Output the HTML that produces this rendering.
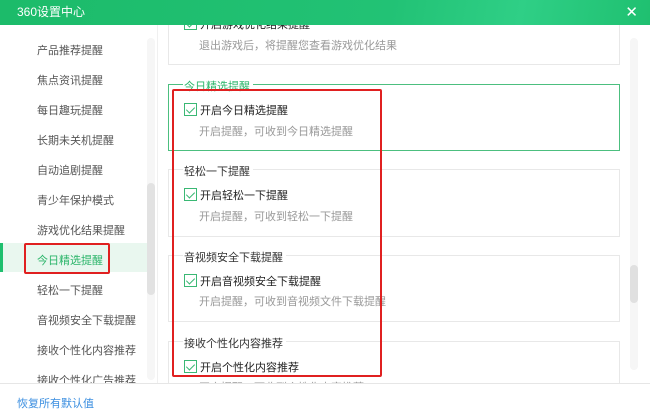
<!DOCTYPE html>
<html><head><meta charset="utf-8"><style>
*{margin:0;padding:0;box-sizing:border-box}
body{width:650px;height:416px;overflow:hidden;background:#fff;font-family:"Liberation Sans","Noto Sans CJK SC",sans-serif;font-size:11px;position:relative;color:#333}
.abs{position:absolute}
.title{left:0;top:0;width:650px;height:25px;background:linear-gradient(100deg,#1cbb6a,#22c275 60%,#2fcf86 80%,#1fc070);color:#fff;font-size:12px;line-height:25px;padding-left:17px;z-index:5}
.side{left:0;top:25px;width:157px;height:358px;background:#fff}
.item{position:absolute;left:37px;color:#555}
.sel{left:0;top:243px;width:148px;height:29px;background:#e9f7ef}
.bar{left:0;top:243px;width:3px;height:29px;background:#1fbf6e}
.box{position:absolute;left:168px;width:452px;border:1px solid #e8e8e8}
.legend{position:absolute;left:183px;background:#fff;padding:0 3px 0 1px;color:#333;font-size:11px}
.cb{position:absolute;left:184px;width:13px;height:13px;border:1px solid #3ab874;background:#fff}
.cb:after{content:"";position:absolute;left:3px;top:1px;width:4px;height:7px;border:solid #3ab874;border-width:0 1.5px 1.5px 0;transform:rotate(45deg)}
.lab{position:absolute;left:200px;color:#222}
.desc{position:absolute;left:199px;color:#999}
</style></head><body>
<div class="abs title">360设置中心<span style="position:absolute;right:12px;top:0;font-size:15px">✕</span></div>
<div class="abs side"></div>
<div class="abs" style="left:157px;top:25px;width:1px;height:358px;background:#f0f0f0"></div>
<div class="abs sel"></div><div class="abs bar"></div>
<div class="abs" style="left:147px;top:38px;width:8px;height:342px;background:#f6f6f6;border-radius:4px"></div>
<div class="abs" style="left:147px;top:183px;width:8px;height:112px;background:#e2e2e2;border-radius:4px"></div>
<div class="item" style="top:42px">产品推荐提醒</div>
<div class="item" style="top:72px">焦点资讯提醒</div>
<div class="item" style="top:102px">每日趣玩提醒</div>
<div class="item" style="top:132px">长期未关机提醒</div>
<div class="item" style="top:162px">自动追剧提醒</div>
<div class="item" style="top:192px">青少年保护模式</div>
<div class="item" style="top:222px">游戏优化结果提醒</div>
<div class="item" style="top:252px;color:#2bb56a">今日精选提醒</div>
<div class="item" style="top:282px">轻松一下提醒</div>
<div class="item" style="top:312px">音视频安全下载提醒</div>
<div class="item" style="top:342px">接收个性化内容推荐</div>
<div class="item" style="top:372px">接收个性化广告推荐</div>
<div class="abs" style="left:24px;top:243px;width:86px;height:31px;border:2px solid #e02020;border-radius:2px"></div>

<div class="box" style="top:15px;height:50px"></div>
<div class="cb" style="top:17px"></div><div class="lab" style="top:16px">开启游戏优化结果提醒</div>
<div class="desc" style="top:37px">退出游戏后，将提醒您查看游戏优化结果</div>

<div class="box" style="top:84px;height:67px;border-color:#4cbf7f"></div>
<div class="legend" style="top:78px;color:#2bb56a">今日精选提醒</div>
<div class="cb" style="top:103px"></div><div class="lab" style="top:102px">开启今日精选提醒</div>
<div class="desc" style="top:123px">开启提醒，可收到今日精选提醒</div>

<div class="box" style="top:169px;height:68px"></div>
<div class="legend" style="top:163px">轻松一下提醒</div>
<div class="cb" style="top:188px"></div><div class="lab" style="top:187px">开启轻松一下提醒</div>
<div class="desc" style="top:208px">开启提醒，可收到轻松一下提醒</div>

<div class="box" style="top:255px;height:67px"></div>
<div class="legend" style="top:249px">音视频安全下载提醒</div>
<div class="cb" style="top:274px"></div><div class="lab" style="top:273px">开启音视频安全下载提醒</div>
<div class="desc" style="top:293px">开启提醒，可收到音视频文件下载提醒</div>

<div class="box" style="top:341px;height:60px"></div>
<div class="legend" style="top:335px">接收个性化内容推荐</div>
<div class="cb" style="top:360px"></div><div class="lab" style="top:359px">开启个性化内容推荐</div>
<div class="desc" style="top:379px">开启提醒，可收到个性化内容推荐</div>

<div class="abs" style="left:630px;top:38px;width:8px;height:332px;background:#f6f6f6;border-radius:4px"></div>
<div class="abs" style="left:630px;top:265px;width:8px;height:38px;background:#e0e0e0;border-radius:4px"></div>

<div class="abs" style="left:172px;top:89px;width:210px;height:288px;border:2px solid #e02020;border-radius:2px"></div>

<div class="abs" style="left:0;top:383px;width:650px;height:33px;background:#fff;border-top:1px solid #e6e6e6"></div>
<div class="abs" style="left:17px;top:395px;color:#3a8ee0">恢复所有默认值</div>
</body></html>
